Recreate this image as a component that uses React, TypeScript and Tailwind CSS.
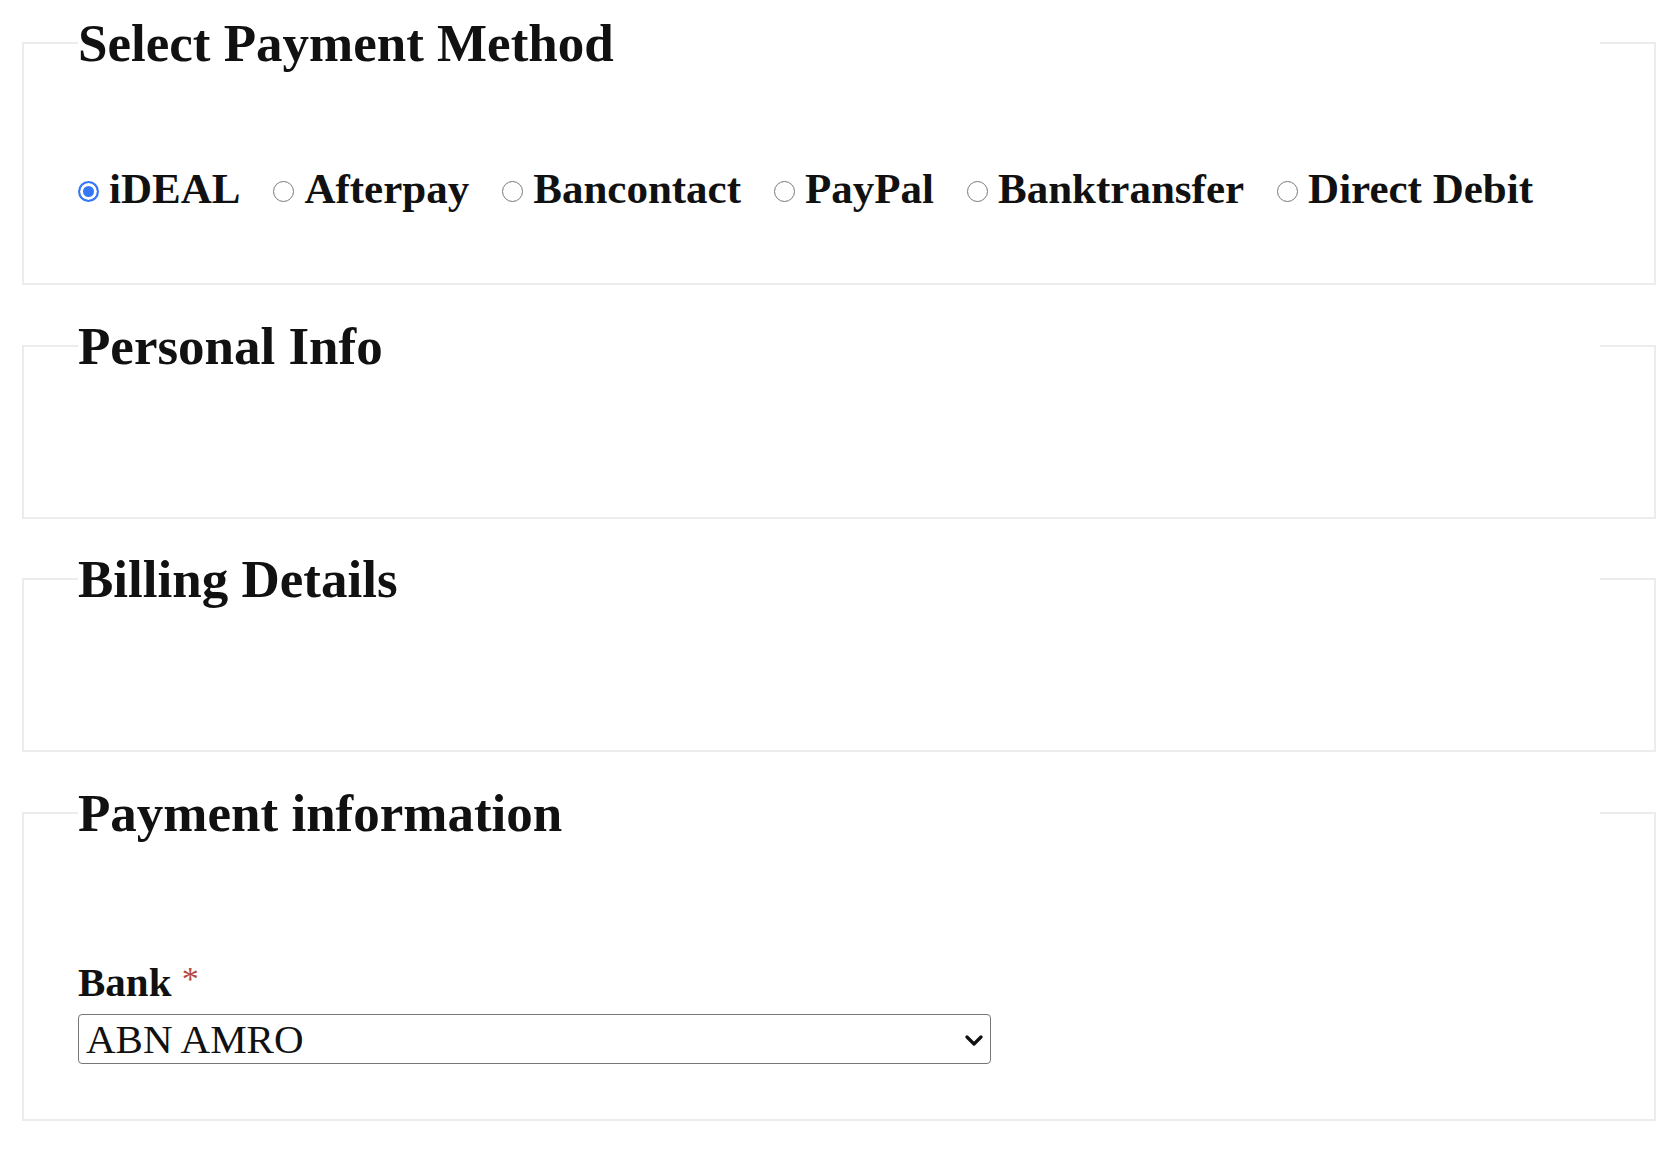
import React from 'react'

const methods = ['iDEAL', 'Afterpay', 'Bancontact', 'PayPal', 'Banktransfer', 'Direct Debit']

function Section({
  title,
  className = '',
  children,
}: {
  title: string
  className?: string
  children?: React.ReactNode
}) {
  return (
    <fieldset className={`border-2 border-[#ececec] px-[54px] ${className}`}>
      <legend className="w-full p-0 text-[53px] font-bold leading-[60px]">{title}</legend>
      {children}
    </fieldset>
  )
}

export default function App() {
  const [method, setMethod] = React.useState('iDEAL')

  return (
    <main className="min-h-screen bg-white pt-[13px] pl-[22px] pr-[20px] pb-[20px] font-['Liberation_Serif',serif] text-[#111111]">
      {/* Payment method */}
      <Section title="Select Payment Method" className="pb-[70px]">
        <div className="mt-[92px] flex items-center">
          {methods.map((m) => (
            <label key={m} className="mr-[33px] flex cursor-pointer items-center gap-[10px]">
              <input
                type="radio"
                name="method"
                checked={method === m}
                onChange={() => setMethod(m)}
                className="mt-[5px] h-[21px] w-[21px] shrink-0 appearance-none rounded-full border-[1.5px] border-[#7a7a7a] bg-white checked:border-2 checked:border-[#3478f6] checked:bg-[#3478f6] checked:shadow-[inset_0_0_0_3px_white]"
              />
              <span className="text-[43px] font-bold leading-[48px]">{m}</span>
            </label>
          ))}
        </div>
      </Section>

      {/* Personal info */}
      <Section title="Personal Info" className="mt-[31px] pb-[141px]" />

      {/* Billing */}
      <Section title="Billing Details" className="mt-[30px] pb-[141px]" />

      {/* Payment info */}
      <Section title="Payment information" className="mt-[31px] pb-[55px]">
        <div className="mt-[116px]">
          <label htmlFor="bank" className="block text-[41px] font-bold leading-[46px]">
            Bank <span className="align-top text-[34px] font-normal leading-[40px] text-[#b5473e]">*</span>
          </label>
          <div className="relative mt-[9px] w-[913px]">
            <select
              id="bank"
              defaultValue="abn"
              className="h-[50px] w-full appearance-none rounded-[4px] border border-[#767676] bg-white pl-[7px] pr-[40px] font-['Liberation_Serif',serif] text-[41px] leading-[48px] text-[#111111] outline-none"
            >
              <option value="abn">ABN AMRO</option>
              <option value="asn">ASN Bank</option>
              <option value="ing">ING</option>
              <option value="rabo">Rabobank</option>
            </select>
            <svg
              className="pointer-events-none absolute right-[8px] top-[21px]"
              width="18"
              height="11"
              viewBox="0 0 18 11"
              fill="none"
            >
              <path d="M2 2l7 7 7-7" stroke="#111111" strokeWidth="3.2" strokeLinecap="round" strokeLinejoin="round" />
            </svg>
          </div>
        </div>
      </Section>
    </main>
  )
}
